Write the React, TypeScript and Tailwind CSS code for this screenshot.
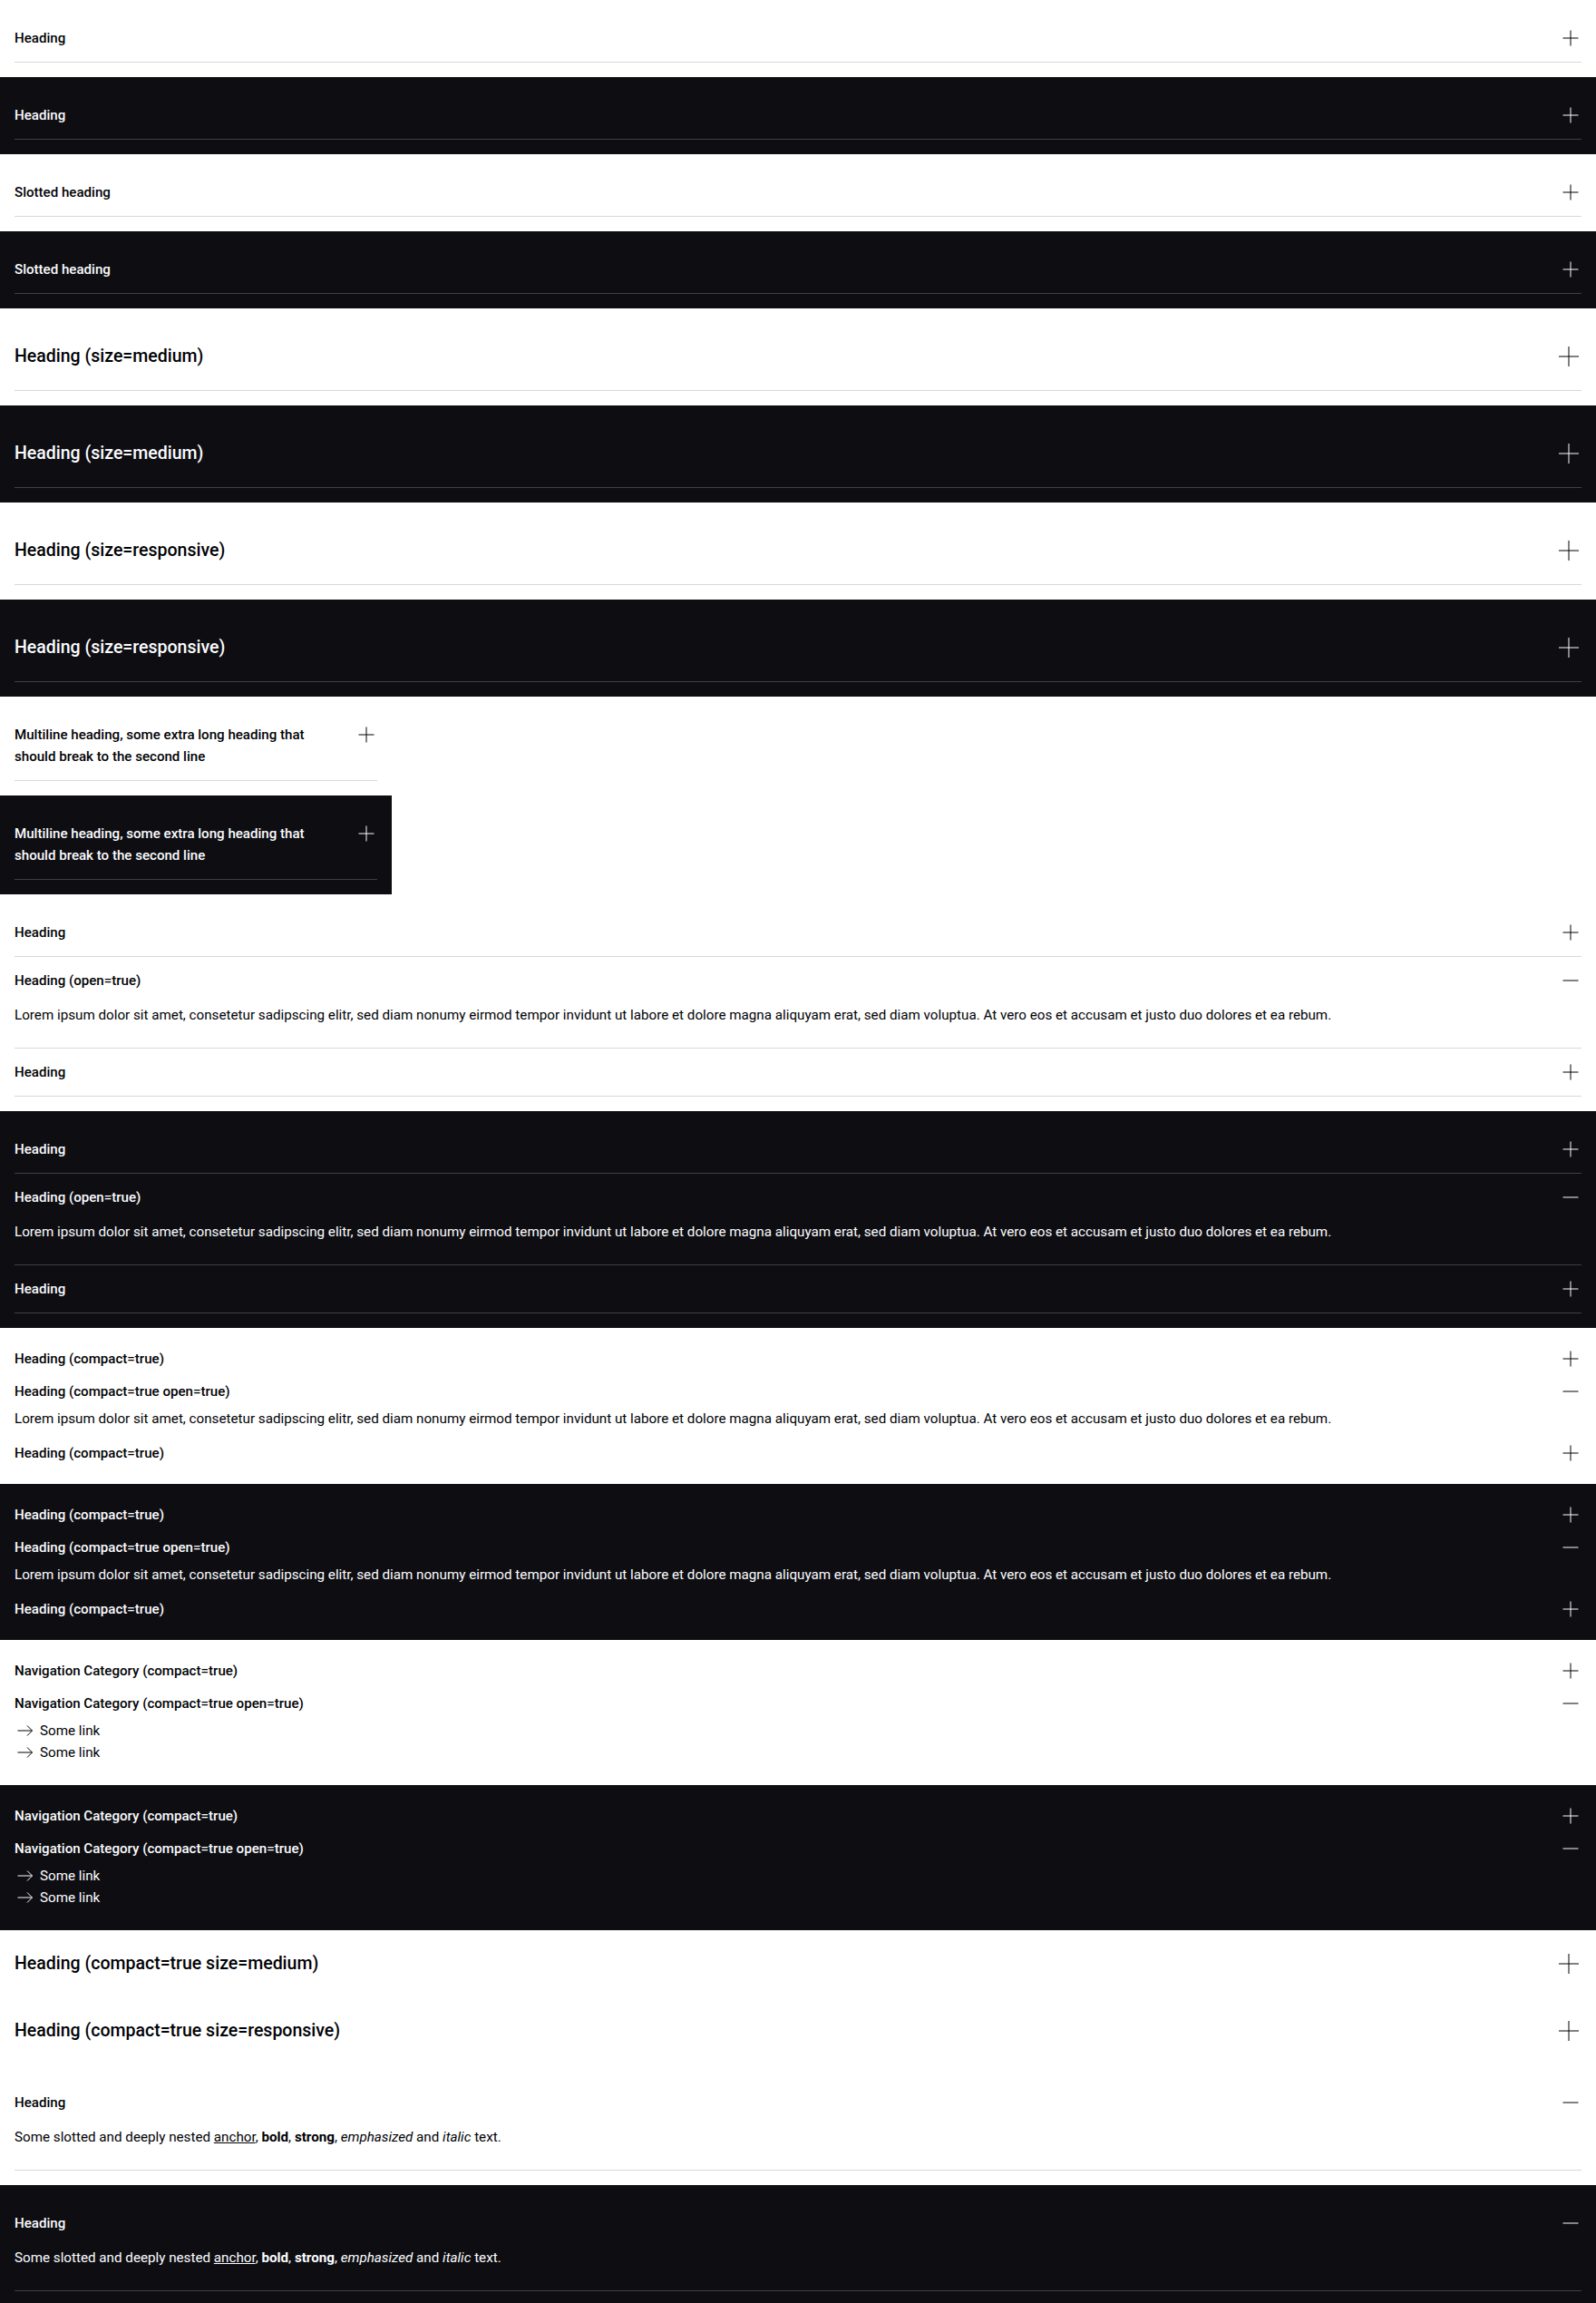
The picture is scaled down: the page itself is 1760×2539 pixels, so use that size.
import React from 'react';

type Theme = 'light' | 'dark';
type Size = 'small' | 'medium';

const LOREM =
  'Lorem ipsum dolor sit amet, consetetur sadipscing elitr, sed diam nonumy eirmod tempor invidunt ut labore et dolore magna aliquyam erat, sed diam voluptua. At vero eos et accusam et justo duo dolores et ea rebum.';

const ToggleIcon: React.FC<{ open: boolean; size: Size }> = ({ open, size }) => {
  const box = size === 'medium' ? 28 : 24;
  const a = size === 'medium' ? 3 : 3.5;
  const b = box - a;
  const c = box / 2;
  return (
    <svg width={box} height={box} viewBox={`0 0 ${box} ${box}`} fill="none" stroke="currentColor" strokeWidth={1}>
      <line x1={a} y1={c} x2={b} y2={c} />
      {!open && <line x1={c} y1={a} x2={c} y2={b} />}
    </svg>
  );
};

const ArrowIcon = () => (
  <svg width={24} height={24} viewBox="0 0 24 24" fill="none" stroke="currentColor" strokeWidth={1}>
    <line x1="3.5" y1="12" x2="19.5" y2="12" />
    <polyline points="14,6.5 19.5,12 14,17.5" />
  </svg>
);

interface AccordionProps {
  heading: React.ReactNode;
  theme?: Theme;
  size?: Size;
  compact?: boolean;
  open?: boolean;
  children?: React.ReactNode;
}

const Accordion: React.FC<AccordionProps> = ({
  heading,
  theme = 'light',
  size = 'small',
  compact = false,
  open = false,
  children,
}) => {
  const dark = theme === 'dark';
  const border = compact ? '' : dark ? 'border-b border-[#404044]' : 'border-b border-[#d8d8db]';

  let pad = 'py-[14px]';
  if (compact && size === 'small') pad = 'py-1.5';
  if (!compact && size === 'medium') pad = 'py-[21px]';
  if (compact && size === 'medium') pad = 'py-[5px]';

  const textSize = size === 'medium' ? 'text-[19.5px] leading-8' : 'text-[15.1px] leading-6';

  return (
    <div className={border}>
      <div className={`flex items-start justify-between gap-6 ${pad}`}>
        <h2 className={`font-medium ${textSize}`}>{heading}</h2>
        <span className={`flex shrink-0 items-center ${size === 'medium' ? 'h-8' : 'h-6'}`}>
          <ToggleIcon open={open} size={size} />
        </span>
      </div>
      {open && <div className={`text-[15.2px] leading-6 ${compact ? 'pb-2' : 'pb-6'}`}>{children}</div>}
    </div>
  );
};

const Section: React.FC<{ theme: Theme; className?: string; children: React.ReactNode }> = ({
  theme,
  className = '',
  children,
}) => (
  <div
    className={`p-4 ${theme === 'dark' ? 'bg-[#0e0e12] text-[#fbfcff]' : 'bg-white text-[#010205]'} ${className}`}
  >
    {children}
  </div>
);

const Slotted = () => (
  <p>
    Some slotted and deeply nested <a className="underline">anchor</a>, <b>bold</b>, <strong>strong</strong>,{' '}
    <em>emphasized</em> and <i>italic</i> text.
  </p>
);

const NavLinks = () => (
  <div className="flex flex-col">
    {[0, 1].map((i) => (
      <a key={i} className="flex items-center gap-1 leading-6">
        <ArrowIcon />
        <span>Some link</span>
      </a>
    ))}
  </div>
);

export default function App() {
  const themes: Theme[] = ['light', 'dark'];
  return (
    <div className="min-h-screen bg-white font-['Roboto','Liberation_Sans',sans-serif]">
      {themes.map((t) => (
        <Section key={`h-${t}`} theme={t}>
          <Accordion theme={t} heading="Heading" />
        </Section>
      ))}
      {themes.map((t) => (
        <Section key={`s-${t}`} theme={t}>
          <Accordion theme={t} heading="Slotted heading" />
        </Section>
      ))}
      {themes.map((t) => (
        <Section key={`m-${t}`} theme={t}>
          <Accordion theme={t} size="medium" heading="Heading (size=medium)" />
        </Section>
      ))}
      {themes.map((t) => (
        <Section key={`r-${t}`} theme={t}>
          <Accordion theme={t} size="medium" heading="Heading (size=responsive)" />
        </Section>
      ))}
      {themes.map((t) => (
        <Section key={`ml-${t}`} theme={t} className="w-[432px]">
          <Accordion theme={t} heading="Multiline heading, some extra long heading that should break to the second line" />
        </Section>
      ))}
      {themes.map((t) => (
        <Section key={`o-${t}`} theme={t}>
          <Accordion theme={t} heading="Heading" />
          <Accordion theme={t} heading="Heading (open=true)" open>
            {LOREM}
          </Accordion>
          <Accordion theme={t} heading="Heading" />
        </Section>
      ))}
      {themes.map((t) => (
        <Section key={`c-${t}`} theme={t}>
          <Accordion theme={t} compact heading="Heading (compact=true)" />
          <Accordion theme={t} compact open heading="Heading (compact=true open=true)">
            {LOREM}
          </Accordion>
          <Accordion theme={t} compact heading="Heading (compact=true)" />
        </Section>
      ))}
      {themes.map((t) => (
        <Section key={`n-${t}`} theme={t}>
          <Accordion theme={t} compact heading="Navigation Category (compact=true)" />
          <Accordion theme={t} compact open heading="Navigation Category (compact=true open=true)">
            <NavLinks />
          </Accordion>
        </Section>
      ))}
      <Section theme="light">
        <Accordion compact size="medium" heading="Heading (compact=true size=medium)" />
      </Section>
      <Section theme="light">
        <Accordion compact size="medium" heading="Heading (compact=true size=responsive)" />
      </Section>
      {themes.map((t) => (
        <Section key={`sl-${t}`} theme={t}>
          <Accordion theme={t} open heading="Heading">
            <Slotted />
          </Accordion>
        </Section>
      ))}
    </div>
  );
}
